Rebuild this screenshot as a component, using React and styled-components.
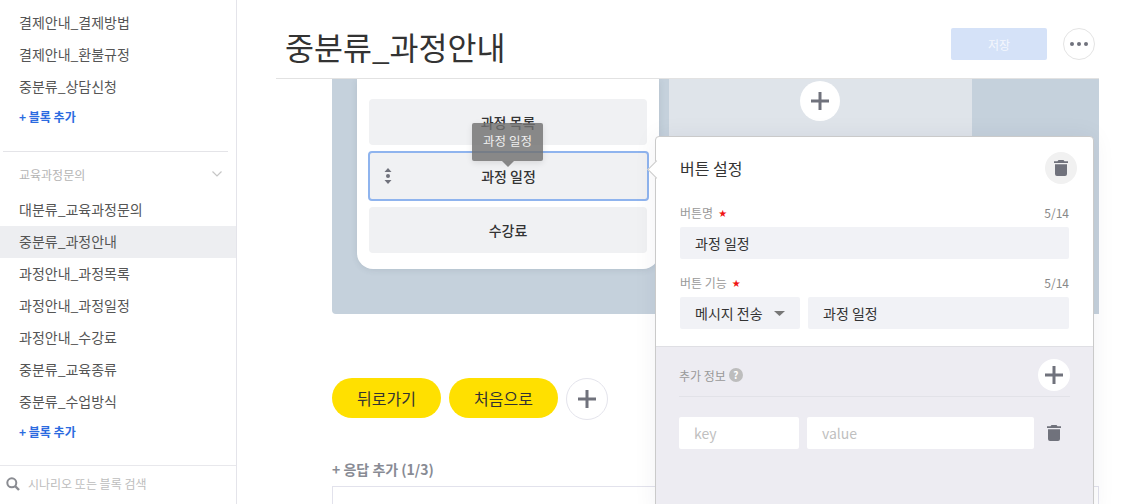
import React from 'react'
import styled, { createGlobalStyle } from 'styled-components'

const Global = createGlobalStyle`
  html, body { margin: 0; height: 100%; background: #fff; }
  * { box-sizing: border-box; }
  body {
    font-family: "Noto Sans CJK KR", "Noto Sans", sans-serif;
    color: #333;
  }
`

const Page = styled.div`
  display: flex;
  width: 1135px;
  height: 504px;
  overflow: hidden;
  background: #fff;
`

const Sidebar = styled.aside`
  width: 237px;
  flex: none;
  display: flex;
  flex-direction: column;
  border-right: 1px solid #e4e4ea;
`

const BlockList = styled.div`
  flex: 1;
  padding-top: 7px;
`

const BlockItem = styled.div`
  height: 32px;
  padding-left: 19px;
  font-size: 14px;
  line-height: 30px;
  color: #555;
  background: ${({ $active }) => ($active ? '#edeef1' : 'transparent')};
`

const AddBlock = styled.div`
  height: 28px;
  padding-left: 19px;
  font-size: 12px;
  font-weight: 700;
  line-height: 28px;
  color: #2b6be0;
`

const GroupDivider = styled.hr`
  height: 1px;
  margin: 20px 8px 0 3px;
  border: 0;
  background: #e4e4e8;
`

const GroupHead = styled.div`
  display: flex;
  align-items: center;
  justify-content: space-between;
  height: 44px;
  padding: 0 14px 0 19px;
  margin-bottom: -2px;
  font-size: 12px;
  color: #b4b4b4;
`

const SearchBar = styled.div`
  display: flex;
  align-items: center;
  gap: 8px;
  height: 39px;
  padding: 0 0 3px 6px;
  border-top: 1px solid #e8e8ec;
  font-size: 12px;
  color: #bdbdbd;
`

const Main = styled.main`
  position: relative;
  flex: 1;
  display: flex;
  flex-direction: column;
  min-width: 0;
`

const Header = styled.header`
  display: flex;
  align-items: center;
  width: 823px;
  height: 79px;
  margin-left: 39px;
  padding: 10px 4px 0 9px;
  border-bottom: 1px solid #e2e2e2;
`

const Title = styled.h1`
  flex: 1;
  margin: 3px 0 0;
  font-size: 31.5px;
  font-weight: 400;
  line-height: 36px;
  color: #333;
`

const SaveButton = styled.button`
  width: 96px;
  height: 32px;
  margin-right: 16px;
  border: 0;
  border-radius: 2px;
  background: #d5e2f8;
  color: #f4f7fd;
  font: inherit;
  font-size: 12px;
`

const RoundButton = styled.button`
  display: flex;
  align-items: center;
  justify-content: center;
  flex: none;
  width: ${({ $size }) => $size || 32}px;
  height: ${({ $size }) => $size || 32}px;
  padding: 0;
  border: ${({ $line }) => ($line ? `1px solid ${$line}` : '0')};
  border-radius: 50%;
  background: ${({ $bg }) => $bg || '#fff'};
`

const Body = styled.div`
  flex: 1;
  padding-left: 95px;
  overflow: hidden;
`

const Preview = styled.div`
  display: flex;
  align-items: flex-start;
  gap: 10px;
  width: 767px;
  height: 235px;
  padding-left: 25px;
  border-bottom-left-radius: 4px;
  background: #c5d1dc;
  overflow: hidden;
`

const ChatCard = styled.div`
  width: 302px;
  flex: none;
  display: flex;
  flex-direction: column;
  gap: 6px;
  padding: 20px 12px 16px;
  border-radius: 0 0 16px 16px;
  background: #fff;
  box-shadow: 0 1px 6px rgba(60, 70, 90, 0.12);
`

const ChatButton = styled.div`
  position: relative;
  height: ${({ $selected }) => ($selected ? '50px' : '46px')};
  margin: ${({ $selected }) => ($selected ? '0 -2px 0 -1px' : '0')};
  border: ${({ $selected }) => ($selected ? '2px solid #8fb4ee' : '0')};
  border-radius: 4px;
  background: #f0f1f3;
  font-size: 14px;
  font-weight: 500;
  line-height: 46px;
  text-align: center;
  color: #333;
`

const DragHandle = styled.svg`
  position: absolute;
  left: 14px;
  top: 15px;
`

const Tooltip = styled.div`
  position: absolute;
  left: 102px;
  top: -30px;
  width: 71px;
  height: 38px;
  border-radius: 2px;
  background: rgba(112, 112, 112, 0.82);
  box-shadow: 0 2px 6px rgba(0, 0, 0, 0.1);
  font-size: 12.500px;
  font-weight: 400;
  line-height: 36px;
  color: #eee;
  &::after {
    content: "";
    position: absolute;
    left: 30px;
    top: 38px;
    border: 6px solid transparent;
    border-top-color: rgba(112, 112, 112, 0.82);
    border-bottom: 0;
  }
`

const GhostCard = styled.div`
  display: flex;
  justify-content: center;
  width: 303px;
  height: 100%;
  padding: 2px 1px 0 0;
  flex: none;
  background: #dfe4ea;
`

const Replies = styled.div`
  display: flex;
  align-items: flex-start;
  gap: 8px;
  margin-top: 64px;
`

const ReplyChip = styled.div`
  width: 109px;
  height: 40px;
  border-radius: 20px;
  background: #ffe000;
  font-size: 16px;
  line-height: 40px;
  text-align: center;
  color: #333;
`

const AddReply = styled.div`
  margin-top: 38px;
  font-size: 14px;
  font-weight: 700;
  line-height: 22px;
  color: #888b94;
`

const ReplyBox = styled.div`
  width: 767px;
  height: 60px;
  margin-top: 6px;
  border: 1px solid #e2e2ec;
  background: #fff;
`

const SettingsPanel = styled.section`
  position: absolute;
  left: 418px;
  top: 136px;
  width: 439px;
  height: 380px;
  border: 1px solid #cacaca;
  border-radius: 4px;
  background: #fff;
  box-shadow: 0 0 24px rgba(40, 40, 60, 0.06);
  &::before {
    content: "";
    position: absolute;
    left: -6px;
    top: 26px;
    width: 12px;
    height: 12px;
    border-left: 1px solid #cacaca;
    border-bottom: 1px solid #cacaca;
    background: #fff;
    transform: rotate(45deg);
  }
`

const PanelTop = styled.div`
  position: relative;
  height: 209px;
  padding: 15px 24px 0;
  border-radius: 4px 4px 0 0;
`

const PanelHead = styled.div`
  display: flex;
  align-items: center;
  justify-content: space-between;
  height: 32px;
  margin-right: -8px;
  margin-bottom: 19px;
  font-size: 16px;
  color: #333;
`

const FieldLabel = styled.div`
  display: flex;
  justify-content: space-between;
  height: 20px;
  margin-bottom: 4px;
  font-size: 12px;
  line-height: 20px;
  color: #999;
`

const Star = styled.span`
  margin-left: 5px;
  font-family: "DejaVu Sans", sans-serif;
  font-size: 10px;
  vertical-align: 1px;
  color: #f01414;
`

const Count = styled.span`
  color: #888;
`

const FieldRow = styled.div`
  display: flex;
  gap: 8px;
  margin-bottom: ${({ $gap }) => $gap || 0}px;
`

const Field = styled.div`
  display: flex;
  align-items: center;
  justify-content: ${({ $split }) => ($split ? 'space-between' : 'flex-start')};
  flex: ${({ $width }) => ($width ? 'none' : '1')};
  width: ${({ $width }) => ($width ? `${$width}px` : 'auto')};
  height: 32px;
  padding: 0 15px;
  border-radius: 2px;
  background: ${({ $white }) => ($white ? '#fff' : '#f1f2f6')};
  font-size: 14px;
  color: ${({ $white }) => ($white ? '#c0c0c0' : '#333')};
`

const PanelBottom = styled.div`
  height: 170px;
  padding: 9px 23px 0;
  border-top: 1px solid #dfdfe4;
  background: #edecf2;
`

const ExtraHead = styled.div`
  display: flex;
  align-items: center;
  height: 41px;
  padding-bottom: 2px;
  border-bottom: 1px solid #e2e2e8;
  font-size: 12px;
  color: #999;
  margin-bottom: 20px;
  & > button { margin-left: auto; }
`

const Help = styled.span`
  width: 14px;
  height: 14px;
  margin-left: 3px;
  border-radius: 50%;
  background: #bdbdbd;
  font-size: 10px;
  font-weight: 700;
  line-height: 14px;
  text-align: center;
  color: #fff;
`

const TrashSlot = styled.div`
  display: flex;
  align-items: center;
  justify-content: center;
  width: 28px;
  padding-right: 4px;
  flex: none;
`

const iconColor = '#70727c'

const Trash = () => (
  <svg width="14" height="16" viewBox="0 0 14 16">
    <path fill={iconColor} d="M4.5 0h5l1 1.2H14V3H0V1.2h3.5zM1 4.2h12V14a2 2 0 0 1-2 2H3a2 2 0 0 1-2-2z" />
  </svg>
)

const Plus = ({ size = 18 }) => (
  <svg width={size} height={size} viewBox="0 0 18 18">
    <path fill={iconColor} d="M7.5 0h3v7.5H18v3h-7.5V18h-3v-7.5H0v-3h7.5z" />
  </svg>
)

const Dots = () => (
  <svg width="18" height="4" viewBox="0 0 18 4">
    <g fill={iconColor}>
      <circle cx="2" cy="2" r="2" />
      <circle cx="9" cy="2" r="2" />
      <circle cx="16" cy="2" r="2" />
    </g>
  </svg>
)

const Chevron = () => (
  <svg width="10" height="6" viewBox="0 0 10 6">
    <path d="M.5.5 5 5 9.500.5" fill="none" stroke="#c6c6c6" strokeWidth="1.2" />
  </svg>
)

const Search = () => (
  <svg width="14" height="14" viewBox="0 0 14 14">
    <circle cx="5.800" cy="5.800" r="4.500" fill="none" stroke="#8a8c92" strokeWidth="2" />
    <path d="m9 9 4 4" stroke="#8a8c92" strokeWidth="2.400" />
  </svg>
)

const Caret = () => (
  <svg width="11" height="5" viewBox="0 0 11 5">
    <path d="M0 0h11L5.500 5z" fill="#777" />
  </svg>
)

const firstGroup = ['결제안내_결제방법', '결제안내_환불규정', '중분류_상담신청']
const secondGroup = [
  '대분류_교육과정문의',
  '중분류_과정안내',
  '과정안내_과정목록',
  '과정안내_과정일정',
  '과정안내_수강료',
  '중분류_교육종류',
  '중분류_수업방식',
]

export default function App() {
  return (
    <Page>
      <Global />
      <Sidebar>
        <BlockList>
          {firstGroup.map((name) => <BlockItem key={name}>{name}</BlockItem>)}
          <AddBlock>+ 블록 추가</AddBlock>
          <GroupDivider />
          <GroupHead>
            교육과정문의
            <Chevron />
          </GroupHead>
          {secondGroup.map((name) => (
            <BlockItem key={name} $active={name === '중분류_과정안내'}>{name}</BlockItem>
          ))}
          <AddBlock>+ 블록 추가</AddBlock>
        </BlockList>
        <SearchBar>
          <Search />
          시나리오 또는 블록 검색
        </SearchBar>
      </Sidebar>

      <Main>
        <Header>
          <Title>중분류_과정안내</Title>
          <SaveButton>저장</SaveButton>
          <RoundButton $line="#e4e4e4"><Dots /></RoundButton>
        </Header>
        <Body>
          <Preview>
            <ChatCard>
              <ChatButton>과정 목록</ChatButton>
              <ChatButton $selected>
                <DragHandle width="8" height="16" viewBox="0 0 8 16">
                  <g fill={iconColor}>
                    <path d="M4 0l3.500 4H.5z" />
                    <circle cx="4" cy="8" r="2" />
                    <path d="M4 16l3.500-4H.5z" />
                  </g>
                </DragHandle>
                과정 일정
                <Tooltip>과정 일정</Tooltip>
              </ChatButton>
              <ChatButton>수강료</ChatButton>
            </ChatCard>
            <GhostCard>
              <RoundButton $size={40}><Plus /></RoundButton>
            </GhostCard>
          </Preview>
          <Replies>
            <ReplyChip>뒤로가기</ReplyChip>
            <ReplyChip>처음으로</ReplyChip>
            <RoundButton $size={42} $line="#e4e4ec"><Plus /></RoundButton>
          </Replies>
          <AddReply>+ 응답 추가 (1/3)</AddReply>
          <ReplyBox />
        </Body>

        <SettingsPanel>
          <PanelTop>
            <PanelHead>
              버튼 설정
              <RoundButton $bg="#f1f1f1"><Trash /></RoundButton>
            </PanelHead>
            <FieldLabel>
              <span>버튼명<Star>★</Star></span>
              <Count>5/14</Count>
            </FieldLabel>
            <FieldRow $gap={14}>
              <Field>과정 일정</Field>
            </FieldRow>
            <FieldLabel>
              <span>버튼 기능<Star>★</Star></span>
              <Count>5/14</Count>
            </FieldLabel>
            <FieldRow>
              <Field $width={120} $split>메시지 전송<Caret /></Field>
              <Field>과정 일정</Field>
            </FieldRow>
          </PanelTop>
          <PanelBottom>
            <ExtraHead>
              추가 정보<Help>?</Help>
              <RoundButton><Plus /></RoundButton>
            </ExtraHead>
            <FieldRow>
              <Field $white $width={120}>key</Field>
              <Field $white>value</Field>
              <TrashSlot><Trash /></TrashSlot>
            </FieldRow>
          </PanelBottom>
        </SettingsPanel>
      </Main>
    </Page>
  )
}
